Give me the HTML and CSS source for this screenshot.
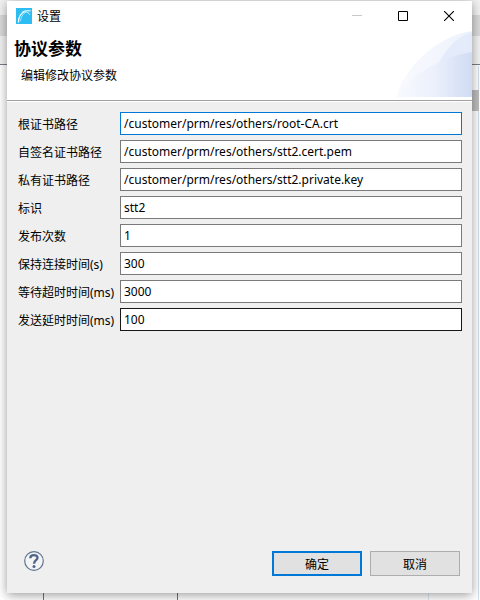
FILE: index.html
```html
<!DOCTYPE html>
<html lang="zh-CN">
<head>
    <meta charset="UTF-8">
    <meta name="viewport" content="width=device-width, initial-scale=1.0">
    <title>设置</title>
    <link rel="stylesheet" href="styles.css">
</head>
<body>
    <div class="dialog">
        <!-- Title bar -->
        <div class="titlebar">
            <svg class="app-icon" width="16" height="16" viewBox="0 0 16 16" aria-hidden="true">
                <rect width="16" height="16" fill="#2dbdf2"/>
                <path d="M2.500 14.500C2.500 9 5 5 9 3.500" fill="none" stroke="#fff" stroke-width="1.3"/>
                <path d="M4.500 13C5 9 6.500 6 9.500 4.500" fill="none" stroke="#a5e3fa" stroke-width="1"/>
                <path d="M6 4.500C8.500 2.500 12 2.500 15 3" fill="none" stroke="#d5f2fd" stroke-width="1.2"/>
                <path d="M9 4C11.500 3.800 13 5 14 7" fill="none" stroke="#d5f2fd" stroke-width="1"/>
            </svg>
            <span class="title">设置</span>
            <button class="window-button" type="button" aria-label="最小化" disabled>
                <svg width="10" height="10" viewBox="0 0 10 10"><path d="M0 4.500H10" stroke="#c8c8c8"/></svg>
            </button>
            <button class="window-button" type="button" aria-label="最大化">
                <svg width="10" height="10" viewBox="0 0 10 10"><path d="M.5.5H9.500V9.500H.5Z" fill="none" stroke="#000"/></svg>
            </button>
            <button class="window-button" type="button" aria-label="关闭">
                <svg width="10" height="10" viewBox="0 0 10 10"><path d="M0 0L10 10M10 0L0 10" stroke="#000" stroke-width="1.1"/></svg>
            </button>
        </div>

        <!-- Banner -->
        <div class="banner">
            <h1>协议参数</h1>
            <p>编辑修改协议参数</p>
            <svg class="swoosh" width="75" height="66" viewBox="0 0 75 66" aria-hidden="true">
                <defs>
                    <linearGradient id="fade">
                        <stop offset="0" stop-color="#f8fafe"/>
                        <stop offset="0.5" stop-color="#f3f6fd"/>
                        <stop offset="1" stop-color="#ecf2fc"/>
                    </linearGradient>
                    <linearGradient id="shade" gradientUnits="userSpaceOnUse" x1="0" y1="0" x2="75" y2="0">
                        <stop offset="0" stop-color="#f8fafe"/>
                        <stop offset="0.5" stop-color="#ebf0fb"/>
                        <stop offset="1" stop-color="#d0dcf4"/>
                    </linearGradient>
                </defs>
                <path d="M0 66C3 42 39 4 75 0V66Z" fill="url(#fade)"/>
                <path d="M40 36C47 20 60 5 75 1V36Z" fill="#e1e9f9" opacity="0.8"/>
                <path d="M0 66C9 49 38 27 75 21V66Z" fill="url(#shade)"/>
            </svg>
        </div>

        <!-- Parameters -->
        <form class="content">
            <div class="fields">
                <label for="root-cert">根证书路径</label>
                <input class="active" id="root-cert" type="text" value="/customer/prm/res/others/root-CA.crt">

                <label for="self-cert">自签名证书路径</label>
                <input id="self-cert" type="text" value="/customer/prm/res/others/stt2.cert.pem">

                <label for="private-key">私有证书路径</label>
                <input id="private-key" type="text" value="/customer/prm/res/others/stt2.private.key">

                <label for="client-id">标识</label>
                <input id="client-id" type="text" value="stt2">

                <label for="publish-count">发布次数</label>
                <input id="publish-count" type="text" value="1">

                <label for="keep-alive">保持连接时间(s)</label>
                <input id="keep-alive" type="text" value="300">

                <label for="timeout">等待超时时间(ms)</label>
                <input id="timeout" type="text" value="3000">

                <label for="delay">发送延时时间(ms)</label>
                <input class="hovered" id="delay" type="text" value="100">
            </div>

            <div class="footer">
                <button class="help" type="button" aria-label="帮助">
                    <svg width="20" height="20" viewBox="0 0 20 20">
                        <circle cx="10" cy="10" r="9.300" fill="#f4f4f4" stroke="#607390" stroke-width="1.2"/>
                        <path d="M6.300 7.300C6.300 3 13.800 3.200 13.500 7C13.300 9.300 10 9.200 10 12.700" fill="none" stroke="#4f658a" stroke-width="2.4"/>
                        <circle cx="10" cy="15.500" r="1.500" fill="#4f658a"/>
                    </svg>
                </button>
                <button class="button default" type="submit">确定</button>
                <button class="button" type="button">取消</button>
            </div>
        </form>
    </div>
</body>
</html>
```

FILE: styles.css
```css
/* Reset and base styles */
* {
    margin: 0;
    padding: 0;
    box-sizing: border-box;
}

/* The editor window behind the dialog */
body {
    font-family: "Noto Sans", "Noto Sans CJK SC", sans-serif;
    font-size: 12px;
    color: #000;
    display: flex;
    min-height: 100vh;
    padding: 1px 8px 7px 7px;
    background-color: #fff;
    background-image:
        linear-gradient(#bdbdbd, #bdbdbd),
        linear-gradient(#d2dfeb, #d2dfeb),
        linear-gradient(#6d727c, #6d727c),
        linear-gradient(#6d727c, #6d727c),
        linear-gradient(#dce8f2, #dce8f2),
        linear-gradient(#f2f2f2 15px, #dadada 15px, #dadada 36px, #f2f2f2 36px, #f2f2f2 64px, #767b86 64px, #767b86 65px, transparent 65px);
    background-position: right 1px top 90px, right 1px top 66px, 43px 100%, 177px 100%, 428px 100%, 0 0;
    background-size: 7px 21px, 1px 100%, 1px 8px, 1px 8px, 1px 8px, 100% 100%;
    background-repeat: no-repeat;
}

/* Dialog window */
.dialog {
    flex: 1;
    display: flex;
    flex-direction: column;
    background-color: #efefef;
    box-shadow: 0 2px 10px rgba(0, 0, 0, 0.4);
}

.titlebar {
    display: flex;
    align-items: center;
    height: 29px;
    padding-left: 9px;
    background-color: #fff;
}

.title {
    flex: 1;
    margin-left: 5px;
}

.window-button {
    display: flex;
    align-items: center;
    justify-content: center;
    width: 46px;
    height: 29px;
    border: none;
    background: none;
}

/* Banner */
.banner {
    position: relative;
    height: 71px;
    padding: 7px;
    background-color: #fff;
    border-bottom: 1px solid #a0a0a0;
}

.banner h1 {
    font-size: 17px;
    line-height: 24px;
}

.banner p {
    padding: 6px 7px;
    line-height: 18px;
}

.swoosh {
    position: absolute;
    right: 0;
    bottom: 3px;
}

/* Form */
.content {
    flex: 1;
    display: flex;
    flex-direction: column;
    justify-content: space-between;
    padding: 10px 10px 11px 11px;
    border-top: 1px solid #fff;
}

.fields {
    display: grid;
    grid-template-columns: 97px 1fr;
    gap: 5px;
    align-items: center;
}

.fields label {
    white-space: nowrap;
}

.fields input {
    width: 100%;
    height: 23px;
    padding: 0 3px;
    border: 1px solid #7a7a7a;
    background-color: #fff;
    font: inherit;
    outline: none;
}

.fields input.active,
.fields input:focus {
    border-color: #0078d7;
}

.fields input.hovered,
.fields input:hover {
    border-color: #171717;
}

/* Buttons */
.footer {
    display: flex;
    align-items: flex-start;
    gap: 8px;
    padding: 6px 2px 6px 6px;
}

.help {
    width: 20px;
    height: 20px;
    margin-right: auto;
    border: none;
    background: none;
}

.help svg {
    display: block;
}

.button {
    width: 90px;
    height: 25px;
    border: 1px solid #adadad;
    background-color: #e1e1e1;
    font: inherit;
}

.button.default {
    border: 2px solid #0078d7;
}
```
